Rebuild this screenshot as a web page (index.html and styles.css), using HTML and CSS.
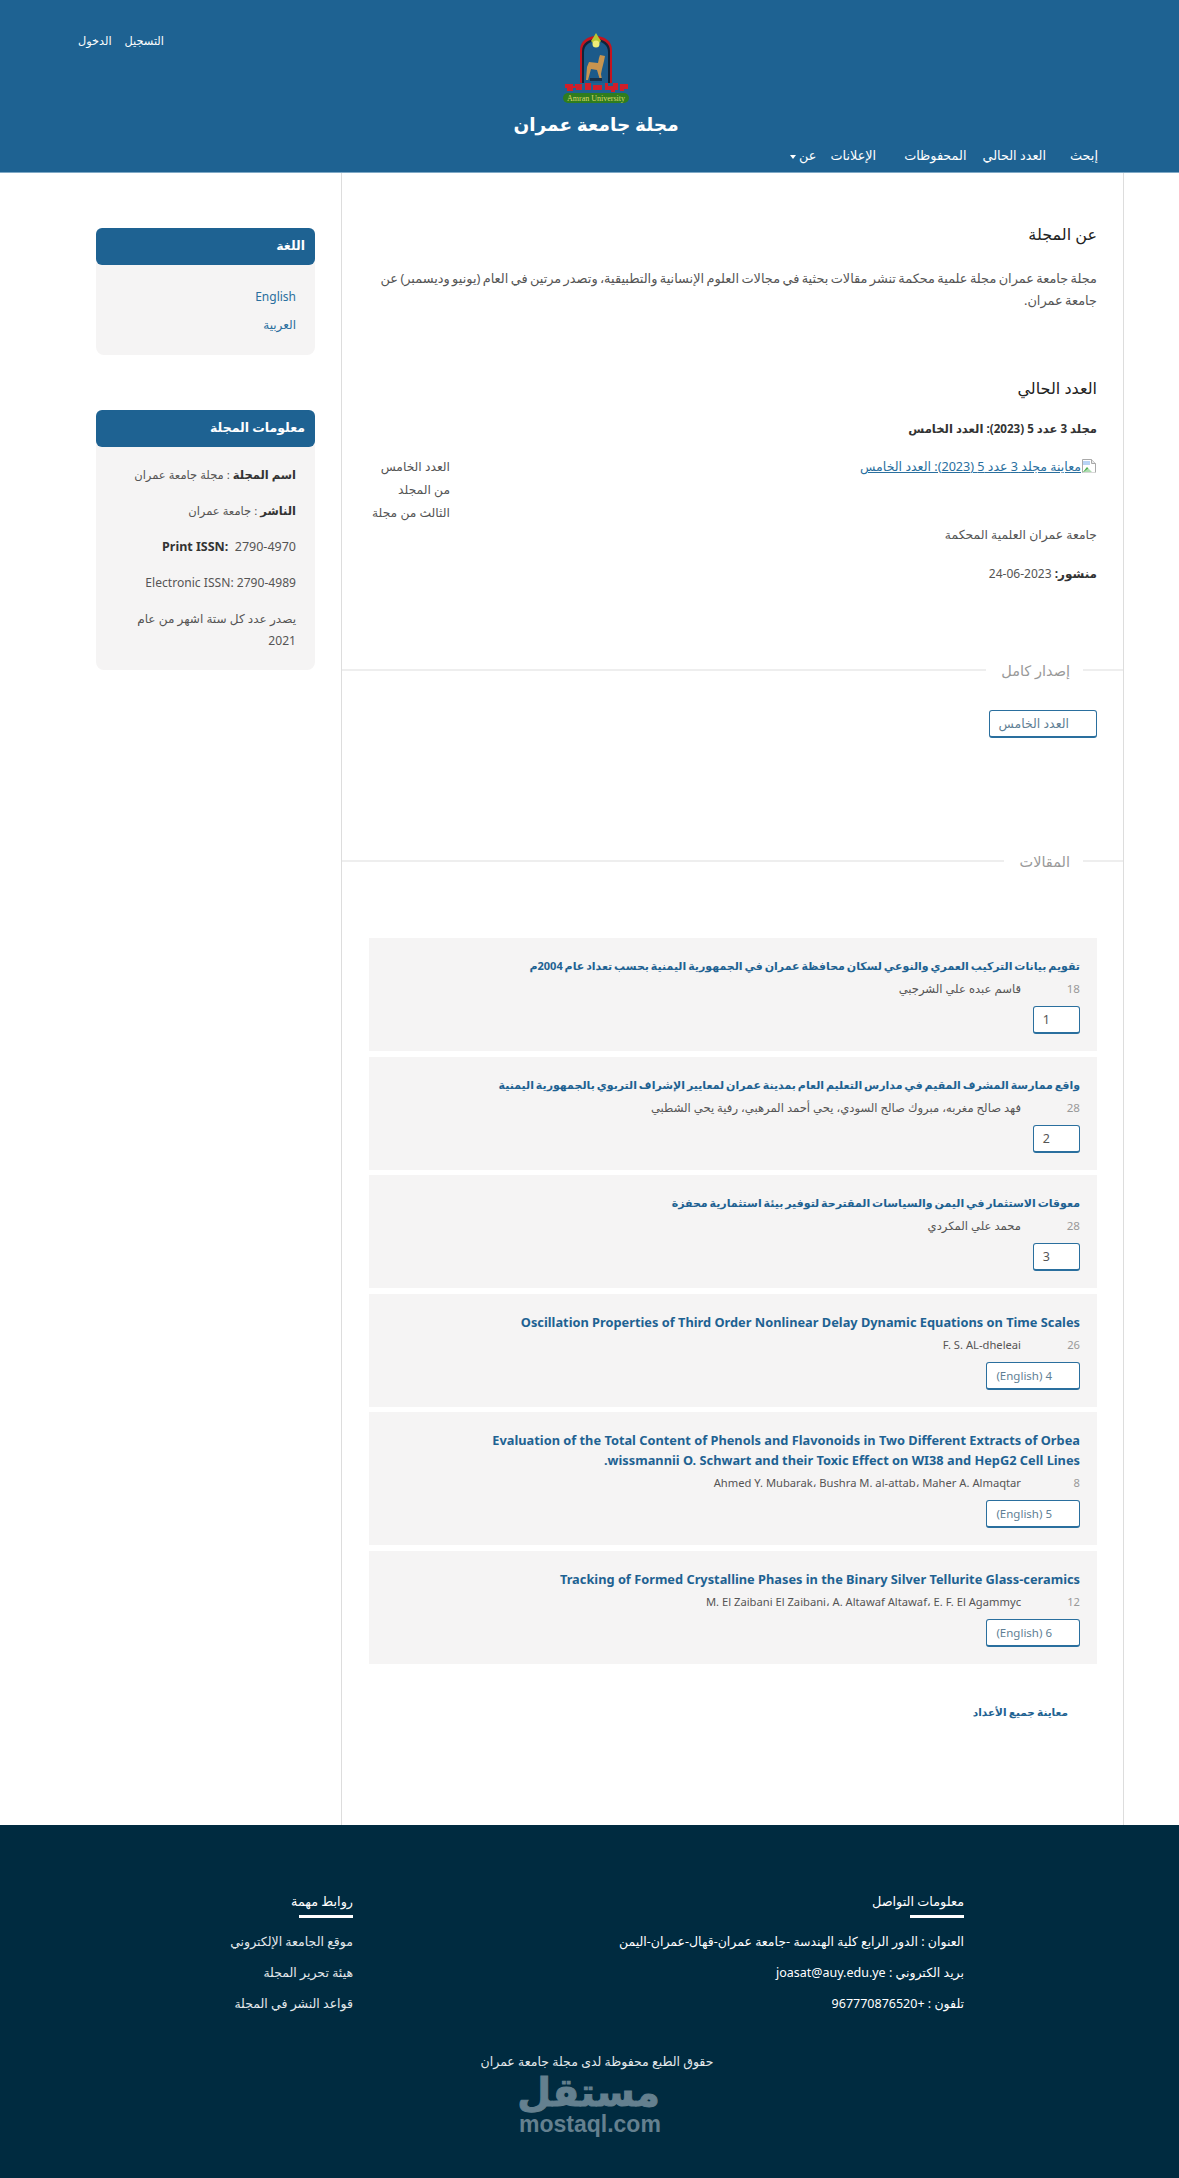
FILE: index.html
```html
<!DOCTYPE html>
<html lang="ar" dir="rtl">
<head>
<meta charset="utf-8">
<title>مجلة جامعة عمران</title>
<link rel="stylesheet" href="styles.css">
</head>
<body>
<header class="site-header">
  <div class="user-nav"><a href="#">التسجيل</a><a href="#">الدخول</a></div>
  <div class="brand">
    <svg class="logo" width="72" height="72" viewBox="0 0 72 72" aria-hidden="true">
      <path d="M20 50V17C20 8 28 3 36 3s16 5 16 14v33z" fill="#c4141f"/>
      <path d="M22 50V18C22 10 29 6 36 6s14 4 14 12v32z" fill="#10243a"/>
      <path d="M24 50V19c0-7 6-11 12-11s12 4 12 11v31z" fill="#1c5a8a"/>
      <path d="M36 0l3 5 2 3-5 5-5-5 2-3z" fill="#b6c832"/>
      <circle cx="36" cy="11" r="3.500" fill="#eeee78"/>
      <path d="M40 22l5 1-1 5-2 8-1 5 1 6h-2l-3-10-6-1-3 11h-2l1-13 2-5 9 1 1-5z" fill="#c8944f"/>
      <rect x="30" y="45" width="12" height="3" fill="#16304a"/>
      <path d="M5 51h8v2h2v-2h7v6h-6v-2h-3v3H7v-3H5zM25 50h6v7h-6zM33 52h9v5h-9zM45 50h3v3h5v-3h5v7h-3v2h-4v-2h-6zM60 51h8v5h-4v2h-4z" fill="#cf1f2a"/>
      <rect x="3" y="60" width="66" height="10" rx="5" fill="#2f7d1e"/>
      <text x="36" y="68" class="logo-text" text-anchor="middle" direction="ltr">Amran University</text>
    </svg>
    <h1 class="site-name">مجلة جامعة عمران</h1>
  </div>
  <nav class="main-nav">
    <a href="#" class="nav-search">إبحث</a>
    <a href="#" class="nav-current">العدد الحالي</a>
    <a href="#" class="nav-archive">المحفوظات</a>
    <a href="#" class="nav-news">الإعلانات</a>
    <a href="#" class="nav-about">عن <span class="caret"></span></a>
  </nav>
</header>

<div class="page">
  <main class="main-col">
    <section class="about">
      <h2 class="sec-title">عن المجلة</h2>
      <p class="about-text">مجلة جامعة عمران مجلة علمية محكمة تنشر مقالات بحثية في مجالات العلوم الإنسانية والتطبيقية، وتصدر مرتين في العام (يونيو وديسمبر) عن جامعة عمران.</p>
    </section>
    <section class="current">
      <h2 class="sec-title">العدد الحالي</h2>
      <h3 class="issue-id">مجلد 3 عدد 5 (2023): العدد الخامس</h3>
      <div class="issue-row">
        <a href="#" class="cover">
          <svg class="broken" width="16" height="16" viewBox="0 0 16 16" aria-hidden="true">
            <path d="M1.500 1.500h9l4 4v9h-13z" fill="#fff" stroke="#a9a9a9"/>
            <path d="M10.500 1.500v4h4" fill="#e8e8e8" stroke="#a9a9a9"/>
            <path d="M2 14l4-5 3 3 2 2z" fill="#4caf50"/>
            <path d="M2 3h7v4H2z" fill="#b9d4f5"/>
            <path d="M0 16l9-7 7 7z" fill="#fff" opacity=".55"/>
          </svg>معاينة مجلد 3 عدد 5 (2023): العدد الخامس</a>
        <div class="issue-desc">العدد الخامس<br>من المجلد<br>الثالث من مجلة</div>
      </div>
      <p class="issue-org">جامعة عمران العلمية المحكمة</p>
      <p class="issue-date"><b>منشور:</b> 2023-06-24</p>
    </section>
    <div class="divider first"><span>إصدار كامل</span></div>
    <div class="galley"><a href="#" class="btn btn-wide">العدد الخامس</a></div>
    <div class="divider second"><span>المقالات</span></div>
    <div class="articles">
      <article class="card">
        <a href="#" class="card-title ar">تقويم بيانات التركيب العمري والنوعي لسكان محافظة عمران في الجمهورية اليمنية بحسب تعداد عام 2004م</a>
        <div class="card-meta ar"><span class="pages">18</span><span>قاسم عبده علي الشرجبي</span></div>
        <a href="#" class="btn btn-num">1</a>
      </article>
      <article class="card">
        <a href="#" class="card-title ar">واقع ممارسة المشرف المقيم في مدارس التعليم العام بمدينة عمران لمعايير الإشراف التربوي بالجمهورية اليمنية</a>
        <div class="card-meta ar"><span class="pages">28</span><span>فهد صالح مغربه، مبروك صالح السودي، يحي أحمد المرهبي، رفية يحي الشطبي</span></div>
        <a href="#" class="btn btn-num">2</a>
      </article>
      <article class="card">
        <a href="#" class="card-title ar">معوقات الاستثمار في اليمن والسياسات المقترحة لتوفير بيئة استثمارية محفزة</a>
        <div class="card-meta ar"><span class="pages">28</span><span>محمد علي المكردي</span></div>
        <a href="#" class="btn btn-num">3</a>
      </article>
      <article class="card">
        <a href="#" class="card-title">Oscillation Properties of Third Order Nonlinear Delay Dynamic Equations on Time Scales</a>
        <div class="card-meta"><span class="pages">26</span><span>F. S. AL-dheleai</span></div>
        <a href="#" class="btn btn-en">4 (English)</a>
      </article>
      <article class="card">
        <a href="#" class="card-title">Evaluation of the Total Content of Phenols and Flavonoids in Two Different Extracts of Orbea wissmannii O. Schwart and their Toxic Effect on WI38 and HepG2 Cell Lines.</a>
        <div class="card-meta"><span class="pages">8</span><span>Ahmed Y. Mubarak، Bushra M. al-attab، Maher A. Almaqtar</span></div>
        <a href="#" class="btn btn-en">5 (English)</a>
      </article>
      <article class="card">
        <a href="#" class="card-title">Tracking of Formed Crystalline Phases in the Binary Silver Tellurite Glass-ceramics</a>
        <div class="card-meta"><span class="pages">12</span><span>M. El Zaibani El Zaibani، A. Altawaf Altawaf، E. F. El Agammyc</span></div>
        <a href="#" class="btn btn-en">6 (English)</a>
      </article>
    </div>
    <a href="#" class="all-issues">معاينة جميع الأعداد</a>
  </main>

  <aside class="sidebar">
    <div class="block block-lang">
      <h4 class="block-title">اللغة</h4>
      <ul class="lang-list">
        <li><a href="#">English</a></li>
        <li><a href="#">العربية</a></li>
      </ul>
    </div>
    <div class="block block-info">
      <h4 class="block-title">معلومات المجلة</h4>
      <div class="info-body">
        <p class="info-ar"><b>اسم المجلة</b> : مجلة جامعة عمران</p>
        <p class="info-ar"><b>الناشر</b> : جامعة عمران</p>
        <p class="info-issn"><b>Print ISSN:</b>&nbsp; 2790-4970</p>
        <p>Electronic ISSN: 2790-4989</p>
        <p>يصدر عدد كل ستة اشهر من عام 2021</p>
      </div>
    </div>
  </aside>
</div>

<footer class="site-footer">
  <div class="foot-cols">
    <div class="foot-contact">
      <h5 class="foot-title">معلومات التواصل</h5>
      <p>العنوان : الدور الرابع كلية الهندسة -جامعة عمران-قهال-عمران-اليمن</p>
      <p>بريد الكتروني : joasat@auy.edu.ye</p>
      <p>تلفون : +967770876520</p>
    </div>
    <div class="foot-links">
      <h5 class="foot-title">روابط مهمة</h5>
      <p>موقع الجامعة الإلكتروني</p>
      <p>هيئة تحرير المجلة</p>
      <p>قواعد النشر في المجلة</p>
    </div>
  </div>
  <p class="copyright">حقوق الطبع محفوظة لدى مجلة جامعة عمران</p>
  <div class="watermark">
    <div class="wm-ar">مستقل</div>
    <div class="wm-en">mostaql.com</div>
  </div>
</footer>
</body>
</html>
```
FILE: styles.css
```css
* { box-sizing: border-box; }
html, body { margin: 0; padding: 0; }
body {
  font-family: "Noto Sans", "Open Sans", "DejaVu Sans", sans-serif;
  font-size: 13px;
  color: #555;
  background: #fff;
  width: 1179px;
}
a { color: inherit; text-decoration: none; }
h1, h2, h3, h4, h5, p, ul { margin: 0; padding: 0; }
ul { list-style: none; }

/* header */
.site-header {
  height: 173px;
  background: #1e6292;
  border-bottom: 1px solid #7fa9c6;
  color: #fff;
  position: relative;
}
.user-nav {
  position: absolute;
  left: 78px;
  top: 31px;
  display: flex;
  gap: 13px;
  font-size: 11.300px;
  line-height: 20px;
}
.brand {
  display: flex;
  flex-direction: column;
  align-items: center;
  padding-top: 33px;
  padding-left: 13px;
}
.logo { display: block; }
.logo-text { font-family: "Liberation Serif", serif; font-size: 8px; fill: #d8d86a; }
.site-name {
  font-size: 18.500px;
  font-weight: 700;
  line-height: 30px;
  margin-top: 4px;
}
.main-nav {
  position: absolute;
  right: 81px;
  top: 144px;
  display: flex;
  font-size: 12.800px;
  line-height: 22px;
}
.nav-search { margin-left: 24px; }
.nav-current { margin-left: 16px; }
.nav-archive { margin-left: 28px; }
.nav-news { margin-left: 14px; }
.caret {
  display: inline-block;
  width: 0; height: 0;
  border-top: 4px solid #fff;
  border-left: 3px solid transparent;
  border-right: 3px solid transparent;
  vertical-align: middle;
}

/* page */
.page {
  display: flex;
  align-items: stretch;
  padding-right: 55px;
  height: 1652px;
}
.main-col {
  width: 783px;
  flex: none;
  border-left: 1px solid #ddd;
  border-right: 1px solid #ddd;
  padding-top: 48px;
}
.sidebar {
  width: 219px;
  margin-right: 26px;
  padding-top: 55px;
}

.about, .current, .galley, .articles { padding: 0 26px 0 27px; }
.sec-title {
  font-size: 16px;
  font-weight: 400;
  color: #222;
  line-height: 26px;
}
.about-text {
  margin-top: 20px;
  font-size: 12.900px;
  word-spacing: -1px;
  line-height: 22px;
  color: #555;
}
.current { margin-top: 64px; }
.issue-id {
  margin-top: 18px;
  font-size: 11.600px;
  font-weight: 700;
  color: #333;
  line-height: 20px;
}
.issue-row {
  display: flex;
  justify-content: space-between;
  margin-top: 18px;
}
.cover {
  color: #2a6f9e;
  text-decoration: underline;
  font-size: 12.600px;
  line-height: 20px;
  height: 20px;
}
.broken { vertical-align: -3px; }
.issue-desc {
  width: 81px;
  font-size: 12.300px;
  line-height: 23px;
  margin-top: -2px;
}
.issue-org {
  margin-top: 1px;
  font-size: 12.400px;
  line-height: 20px;
}
.issue-date {
  margin-top: 19px;
  font-size: 12px;
  line-height: 20px;
}
.issue-date b { color: #333; }

.divider {
  position: relative;
  display: flex;
  padding-right: 40px;
  height: 24px;
  align-items: center;
}
.divider::before {
  content: "";
  position: absolute;
  left: 0; right: 0; top: 50%;
  height: 2px;
  margin-top: -1px;
  background: #eee;
}
.divider span {
  position: relative;
  background: #fff;
  padding: 0 13px 0 15px;
  font-size: 14.500px;
  color: #999;
}
.divider.first { margin-top: 74px; }
.divider.second { margin-top: 111px; }

.galley { margin-top: 28px; height: 28px; }
.btn {
  display: inline-block;
  height: 28px;
  line-height: 25px;
  background: #fff;
  border: 1px solid #2a6f9e;
  border-bottom-width: 2px;
  border-radius: 3px;
  font-size: 12.500px;
}
.btn-wide { width: 108px; padding-right: 27px; color: #5f7f95; }
.btn-num { width: 47px; padding-right: 29px; color: #555; }
.btn-en { width: 94px; padding-right: 27px; color: #5f7f95; font-size: 11.500px; }

.articles { margin-top: 65px; display: flex; flex-direction: column; gap: 5.500px; }
.card {
  background: #f5f4f4;
  padding: 18px 17px 17px;
}
.card-title {
  display: block;
  max-width: 620px;
  font-size: 12.800px;
  font-weight: 700;
  line-height: 20px;
  color: #1e6292;
}
.card-title.ar { font-size: 11px; word-spacing: -1px; }
.card-meta {
  display: flex;
  margin-top: 3px;
  font-size: 11.200px;
  line-height: 20px;
  color: #555;
}
.card-meta.ar { font-size: 11.600px; }
.pages { width: 59px; color: #999; flex: none; }
.card .btn { margin-top: 7px; display: block; }

.all-issues {
  display: block;
  margin: 38px 55px 0 0;
  font-size: 10.500px;
  word-spacing: -0.500px;
  font-weight: 700;
  line-height: 20px;
  color: #1e6292;
}

/* sidebar */
.block { background: #f5f4f4; border-radius: 8px; }
.block-title {
  background: #1e6292;
  color: #fff;
  height: 37px;
  line-height: 36px;
  border-radius: 6px;
  padding: 0 10px;
  font-size: 12.500px;
  font-weight: 700;
}
.block-lang { height: 127px; }
.lang-list { padding: 18px 19px 0 0; color: #2a6f9e; font-size: 12px; line-height: 28px; }
.block-info { margin-top: 55px; height: 260px; }
.info-body { padding: 17px 19px 0 14px; font-size: 12.100px; line-height: 22px; }
.info-body p { margin-bottom: 14px; }
.info-body p.info-ar { font-size: 11.500px; }
.info-body p.info-issn { font-size: 12.500px; }
.info-body b { color: #333; }

/* footer */
.site-footer {
  height: 353px;
  background: #002b40;
  color: #e4e9ec;
  padding-top: 66px;
  position: relative;
}
.foot-cols { display: flex; padding-right: 215px; }
.foot-contact { width: 611px; }
.foot-title {
  font-size: 12.800px;
  font-weight: 400;
  line-height: 20px;
  color: #fff;
  padding-bottom: 7px;
  margin-bottom: 14px;
  position: relative;
}
.foot-title::after {
  content: "";
  position: absolute;
  right: 0; bottom: 0;
  width: 54px; height: 3px;
  background: #fff;
}
.site-footer p { font-size: 12.500px; line-height: 20px; margin-bottom: 11px; }
.foot-contact p { color: #fff; }
.site-footer p.copyright {
  text-align: center;
  margin-top: 27px;
  padding-left: 15px;
}
.watermark {
  position: absolute;
  left: 519px;
  top: 248px;
  width: 141px;
  text-align: center;
  color: #64808f;
  direction: ltr;
}
.wm-ar { font-size: 39px; font-weight: 700; line-height: 36px; direction: rtl; -webkit-text-stroke: 1px #64808f; }
.wm-en { font-family: "Liberation Sans", sans-serif; font-size: 23px; line-height: 30px; font-weight: 700; }
```
